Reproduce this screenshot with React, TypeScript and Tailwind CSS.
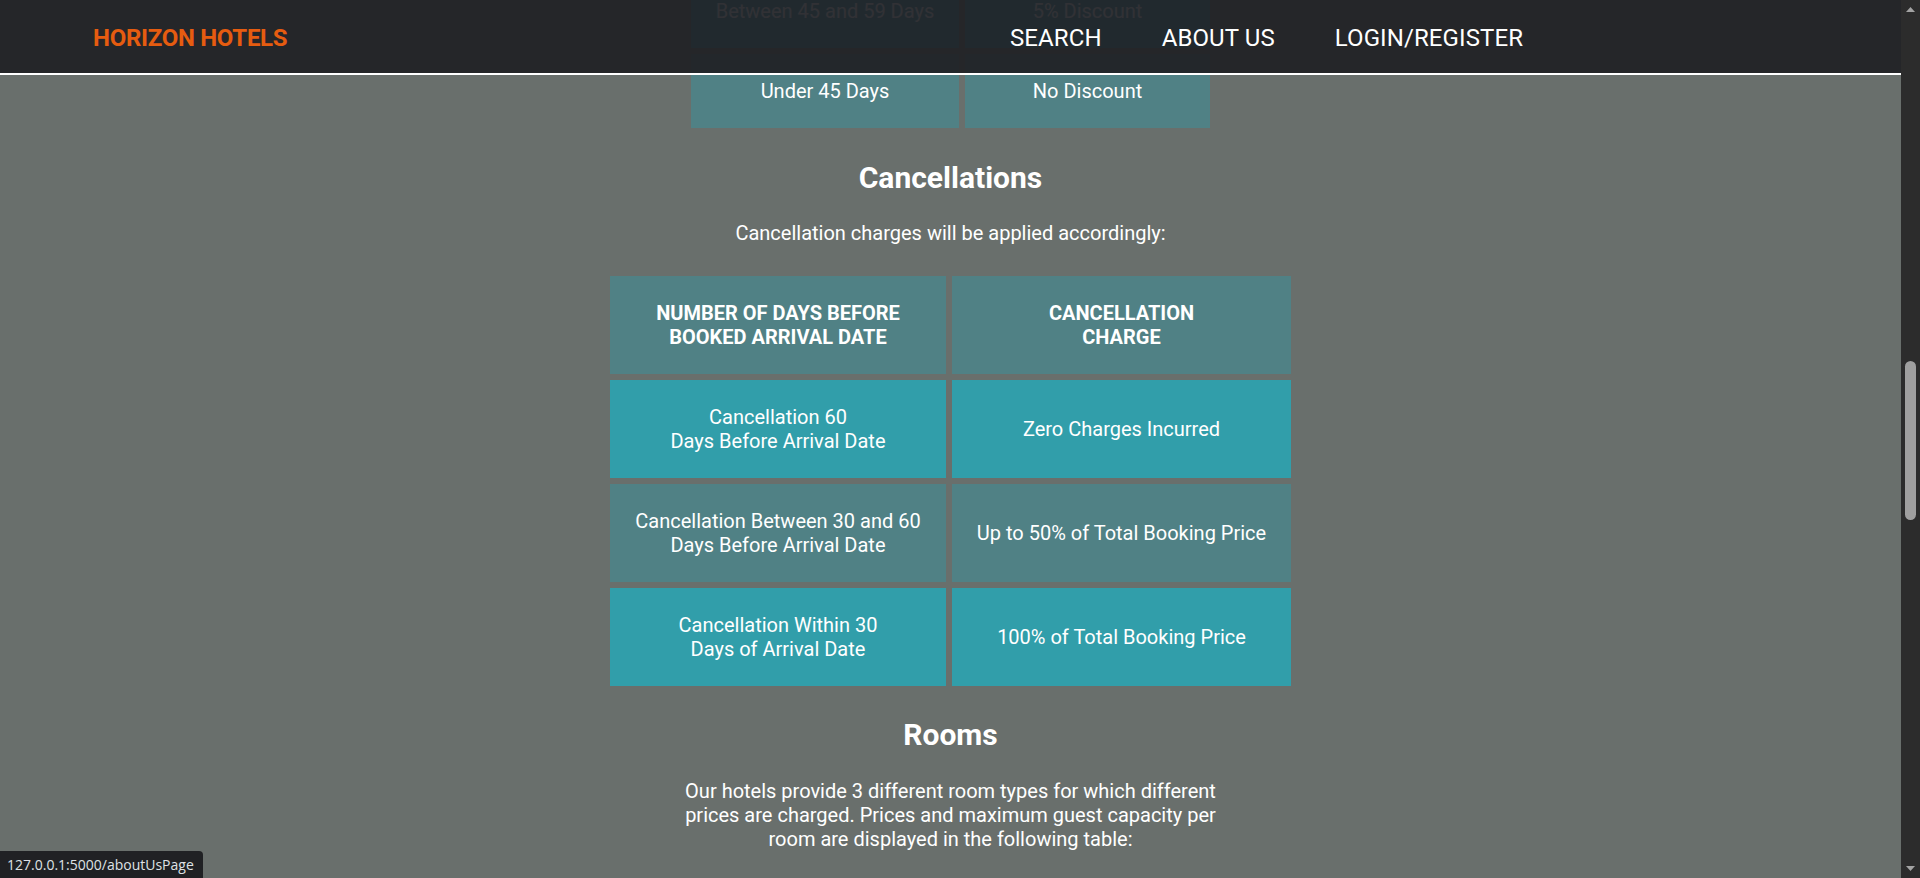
import React from "react";

const font = { fontFamily: "Roboto, 'Liberation Sans', sans-serif" };

function Cell({ children, bright, bold }: { children: React.ReactNode; bright?: boolean; bold?: boolean }) {
  return (
    <div
      className={`${bright ? "bg-[#319eaa]" : "bg-[#508185]"} flex items-center justify-center text-center py-[25px] text-[20px] leading-[24px] text-white ${bold ? "font-bold" : ""}`}
    >
      <div>{children}</div>
    </div>
  );
}

export default function App() {
  return (
    <div className="w-full h-[878px] flex overflow-hidden bg-[#696f6c]" style={font}>
      <div className="relative w-[1901px] h-full overflow-hidden">
        {/* content (scrolled) */}
        <div className="flex flex-col items-center -mt-[26px] text-white">
          <div className="grid grid-cols-[268px_245px] gap-[6px]">
            <Cell bright>Between 45 and 59 Days</Cell>
            <Cell bright>5% Discount</Cell>
            <Cell>Under 45 Days</Cell>
            <Cell>No Discount</Cell>
          </div>

          <h2 className="mt-[32px] text-[30px] leading-[36px] font-bold">Cancellations</h2>
          <p className="mt-[25px] text-[20px] leading-[24px]">Cancellation charges will be applied accordingly:</p>

          <div className="mt-[31px] grid grid-cols-[336px_339px] gap-[6px]">
            <Cell bold>
              NUMBER OF DAYS BEFORE
              <br />
              BOOKED ARRIVAL DATE
            </Cell>
            <Cell bold>
              CANCELLATION
              <br />
              CHARGE
            </Cell>
            <Cell bright>
              Cancellation 60
              <br />
              Days Before Arrival Date
            </Cell>
            <Cell bright>Zero Charges Incurred</Cell>
            <Cell>
              Cancellation Between 30 and 60
              <br />
              Days Before Arrival Date
            </Cell>
            <Cell>Up to 50% of Total Booking Price</Cell>
            <Cell bright>
              Cancellation Within 30
              <br />
              Days of Arrival Date
            </Cell>
            <Cell bright>100% of Total Booking Price</Cell>
          </div>

          <h2 className="mt-[31px] text-[30px] leading-[36px] font-bold">Rooms</h2>
          <p className="mt-[26px] text-[20px] leading-[24px] text-center">
            Our hotels provide 3 different room types for which different
            <br />
            prices are charged. Prices and maximum guest capacity per
            <br />
            room are displayed in the following table:
          </p>
        </div>

        {/* fixed header */}
        <header className="absolute top-0 left-0 right-0 h-[75px] pt-[3px] bg-[#1f2024]/[0.92] border-b-2 border-white flex items-center">
          <div className="w-[1010px] pl-[93px]">
            <span className="text-[24px] font-bold text-[#e65c10] tracking-[-0.3px]">HORIZON HOTELS</span>
          </div>
          <nav className="flex items-center gap-[60px] text-[24px] tracking-[0.1px] text-white">
            <span>SEARCH</span>
            <span>ABOUT US</span>
            <span>LOGIN/REGISTER</span>
          </nav>
        </header>

        {/* status bar */}
        <div
          className="absolute left-0 bottom-0 h-[27px] pl-[7px] pr-[9px] flex items-center bg-[#202124] rounded-tr-[4px] text-[14px] text-[#dfe1e5]"
          style={{ fontFamily: "'Open Sans', 'Noto Sans', sans-serif" }}
        >
          127.0.0.1:5000/aboutUsPage
        </div>
      </div>

      {/* scrollbar */}
      <div className="w-[19px] h-full bg-[#2c2c2c] flex flex-col items-center">
        <svg width="19" height="17" viewBox="0 0 19 17" className="shrink-0">
          <polygon points="5,12 14,12 9.5,7" fill="#a3a3a3" />
        </svg>
        <div className="h-[344px] shrink-0" />
        <div className="w-[11px] h-[159px] rounded-full bg-[#9f9f9f] shrink-0" />
        <div className="flex-1" />
        <svg width="19" height="17" viewBox="0 0 19 17" className="shrink-0">
          <polygon points="5,5 14,5 9.5,10" fill="#a3a3a3" />
        </svg>
      </div>
    </div>
  );
}
